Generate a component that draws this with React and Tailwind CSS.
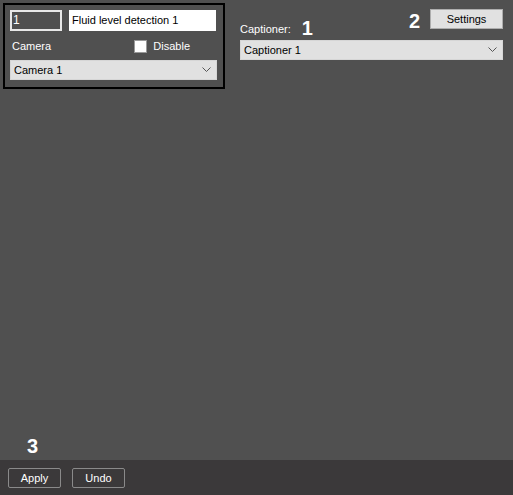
import { useState } from "react";

const Chevron = () => (
    <svg width="9" height="6" viewBox="0 0 9 6" className="shrink-0">
        <path d="M0.5 0.5 L4.5 4.5 L8.5 0.5" fill="none" stroke="#555" strokeWidth="1" />
    </svg>
);

const Select = ({ value, className }) => (
    <div className={`flex items-center justify-between bg-[#e1e1e1] border border-[#d6d6d6] pl-[3px] pr-[5px] text-[11px] text-black ${className}`}>
        <span>{value}</span>
        <Chevron />
    </div>
);

const Mark = ({ children, className = "" }) => (
    <span className={`font-bold text-[20px] leading-none text-white ${className}`}>{children}</span>
);

const App = () => {
    const [disabled, setDisabled] = useState(false);

    return (
        <div
            className="w-[513px] h-[495px] flex flex-col bg-[#505050] overflow-hidden"
            style={{ fontFamily: '"Liberation Sans", Arial, sans-serif' }}
        >
            <div className="flex-1 flex items-start">
                {/* detector box */}
                <div className="mt-[3px] ml-[3px] w-[222px] h-[86px] border-2 border-black pt-[5px] pl-[5px] pr-[7px] flex flex-col">
                    <div className="flex gap-[7px]">
                        <div className="w-[52px] h-[21px] border-2 border-[#e8e8e8] text-white text-[12px] px-[1px] leading-[17px]">1</div>
                        <div className="flex-1 h-[21px] bg-white text-black text-[11px] px-[3px] leading-[21px]">Fluid level detection 1</div>
                    </div>
                    <div className="flex items-center justify-between mt-[9px] h-[13px] pl-[2px] pr-[26px] text-[11px] text-white">
                        <span>Camera</span>
                        <label className="flex items-center gap-[6px]">
                            <span
                                onClick={() => setDisabled(!disabled)}
                                className="w-[13px] h-[13px] bg-white border border-[#9a9a9a]"
                            />
                            <span>Disable</span>
                        </label>
                    </div>
                    <Select value="Camera 1" className="mt-[7px] h-[20px] -mr-[1px]" />
                </div>

                {/* captioner column */}
                <div className="ml-[15px] mt-[9px] w-[263px] flex flex-col">
                    <div className="flex justify-between h-[31px]">
                        <div className="self-end flex items-end pb-[3px]">
                            <span className="text-[11px] text-white leading-none pb-[2px]">Captioner:</span>
                            <Mark className="ml-[11px] -mb-[1px]">1</Mark>
                        </div>
                        <div className="flex items-start">
                            <Mark className="mt-[2px] mr-[10px]">2</Mark>
                            <button className="w-[73px] h-[20px] bg-[#e1e1e1] border border-[#adadad] text-[11px] text-black">Settings</button>
                        </div>
                    </div>
                    <Select value="Captioner 1" className="h-[20px]" />
                </div>
            </div>

            <div className="h-[18px] pl-[27px] flex items-start">
                <Mark className="-mt-[6px]">3</Mark>
            </div>

            <div className="h-[35px] bg-[#3b393a] flex items-start pt-[8px] pl-[8px] gap-[11px]">
                <button className="w-[53px] h-[20px] border border-[#8a8a8a] rounded-[2px] text-white text-[11px]">Apply</button>
                <button className="w-[53px] h-[20px] border border-[#8a8a8a] rounded-[2px] text-white text-[11px]">Undo</button>
            </div>
        </div>
    );
};

export default App;
